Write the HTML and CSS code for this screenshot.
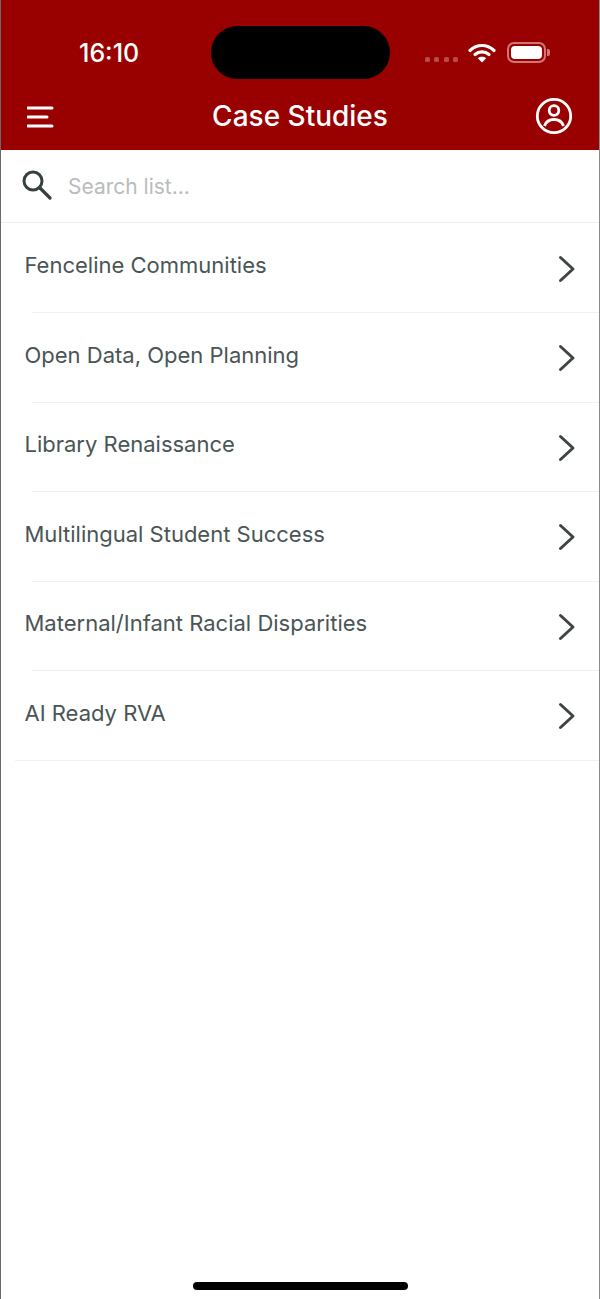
FILE: index.html
```html
<!DOCTYPE html>
<html lang="en">
<head>
  <meta charset="UTF-8">
  <title>Case Studies</title>
  <meta name="viewport" content="width=device-width, initial-scale=1.0">
  <link rel="stylesheet" href="styles.css">
</head>
<body>
  <div class="screen">
    <header class="header">
      <div class="status">
        <span class="time">16:10</span>
        <div class="island"></div>
        <div class="status-icons">
          <div class="signal"><i></i><i></i><i></i><i></i></div>
          <svg class="wifi" width="28" height="20" viewBox="0 0 28 20">
            <path d="M2 7.5 C9 0.8 19 0.8 26 7.5" fill="none" stroke="#fff" stroke-width="3.2" stroke-linecap="round"/>
            <path d="M7 11.5 C11 8 17 8 21 11.5" fill="none" stroke="#fff" stroke-width="3.2" stroke-linecap="round"/>
            <path d="M14 19.5 L9.8 15.2 C12 13.3 16 13.3 18.2 15.2 Z" fill="#fff"/>
          </svg>
          <div class="battery"><div class="battery-fill"></div></div>
          <div class="battery-cap"></div>
        </div>
      </div>
      <div class="nav">
        <svg class="menu-icon" width="38" height="24" viewBox="0 0 38 24">
          <path d="M1 4 H25 M1 13 H20 M1 22 H25" stroke="#fff" stroke-width="3" stroke-linecap="round" fill="none"/>
        </svg>
        <h1>Case Studies</h1>
        <svg class="user-icon" width="38" height="38" viewBox="0 0 38 38" fill="none" stroke="#fff" stroke-width="2.8">
          <circle cx="19" cy="19" r="16.7"/>
          <circle cx="19" cy="13.5" r="4.8"/>
          <path d="M9.5 29 C11 24.5 15 22.5 19 22.5 C23 22.5 27 24.5 28.5 29"/>
        </svg>
      </div>
    </header>

    <div class="search">
      <svg width="32" height="32" viewBox="0 0 32 32" fill="none" stroke="#36403f">
        <circle cx="11" cy="11" r="9" stroke-width="3"/>
        <path d="M18 18 L28 28" stroke-width="3.2" stroke-linecap="round"/>
      </svg>
      <span class="placeholder">Search list...</span>
    </div>

    <ul class="list">
      <li>Fenceline Communities<svg class="chev" width="18" height="28" viewBox="0 0 18 28"><path d="M2.5 2.5 L15 14 L2.5 25.5"/></svg></li>
      <li>Open Data, Open Planning<svg class="chev" width="18" height="28" viewBox="0 0 18 28"><path d="M2.5 2.5 L15 14 L2.5 25.5"/></svg></li>
      <li>Library Renaissance<svg class="chev" width="18" height="28" viewBox="0 0 18 28"><path d="M2.5 2.5 L15 14 L2.5 25.5"/></svg></li>
      <li>Multilingual Student Success<svg class="chev" width="18" height="28" viewBox="0 0 18 28"><path d="M2.5 2.5 L15 14 L2.5 25.5"/></svg></li>
      <li>Maternal/Infant Racial Disparities<svg class="chev" width="18" height="28" viewBox="0 0 18 28"><path d="M2.5 2.5 L15 14 L2.5 25.5"/></svg></li>
      <li>AI Ready RVA<svg class="chev" width="18" height="28" viewBox="0 0 18 28"><path d="M2.5 2.5 L15 14 L2.5 25.5"/></svg></li>
    </ul>

    <div class="home-bar"></div>
  </div>
</body>
</html>
```

FILE: styles.css
```css
* {
  box-sizing: border-box;
}
body {
  margin: 0;
  font-family: Inter, "Liberation Sans", sans-serif;
  background: #ffffff;
}
.screen {
  position: relative;
  height: 1299px;
  border-left: 1px solid #6a6a6a;
  border-right: 1px solid #8a8a8a;
  overflow: hidden;
}
.header {
  height: 150px;
  background: #990000;
  color: #ffffff;
}
.status {
  position: relative;
  height: 96px;
  display: flex;
  justify-content: space-between;
  padding: 38px 20px 0 78px;
}
.time {
  font-size: 25px;
  font-weight: 500;
  line-height: 30px;
}
.island {
  position: absolute;
  left: 210px;
  top: 26px;
  width: 179px;
  height: 53px;
  border-radius: 27px;
  background: #000000;
}
.status-icons {
  display: flex;
  align-items: flex-start;
  height: 30px;
  margin-right: 29px;
}
.signal {
  display: flex;
  gap: 4.5px;
  margin-top: 19px;
  margin-right: 10px;
}
.signal i {
  width: 5px;
  height: 5px;
  border-radius: 1.5px;
  background: #b84a4a;
}
.wifi {
  margin-top: 5px;
  margin-right: 11px;
}
.battery {
  width: 39px;
  height: 21px;
  margin-top: 4px;
  padding: 2px;
  border: 2px solid #cf7777;
  border-radius: 7px;
}
.battery-fill {
  height: 100%;
  background: #ffffff;
  border-radius: 4px;
}
.battery-cap {
  width: 3px;
  height: 7px;
  margin-top: 11px;
  margin-left: 1px;
  background: #cf7777;
  border-radius: 0 2px 2px 0;
}
.nav {
  height: 54px;
  padding: 0 26px 14px 26px;
  display: flex;
  align-items: center;
  justify-content: space-between;
}
.nav h1 {
  margin: 0;
  font-size: 28px;
  font-weight: 500;
  line-height: 40px;
}
.search {
  height: 73px;
  display: flex;
  align-items: center;
  gap: 14px;
  padding: 0 0 0 21px;
  border-bottom: 1px solid #f0f0f0;
}
.placeholder {
  font-size: 21px;
  color: #b9bcbc;
}
.list {
  margin: 0;
  padding: 0.5px 0 0;
  list-style: none;
}
.list li {
  position: relative;
  height: 89.5px;
  display: flex;
  align-items: center;
  justify-content: space-between;
  padding: 0 23px 6px 23.5px;
  font-size: 22px;
  font-weight: 420;
  color: #4a5555;
}
/* separator starts indented, except for the last row */
.list li::after {
  content: "";
  position: absolute;
  left: 31px;
  right: 0;
  bottom: 0;
  height: 1px;
  background: #f1f1f1;
}
.list li:last-child::after {
  left: 14px;
}
.chev {
  fill: none;
  stroke: #3f4545;
  stroke-width: 3;
  stroke-linecap: round;
  stroke-linejoin: round;
  margin-top: 7px;
}
.home-bar {
  position: absolute;
  left: 192px;
  bottom: 9px;
  width: 215px;
  height: 8px;
  border-radius: 4px;
  background: #000000;
}
```
